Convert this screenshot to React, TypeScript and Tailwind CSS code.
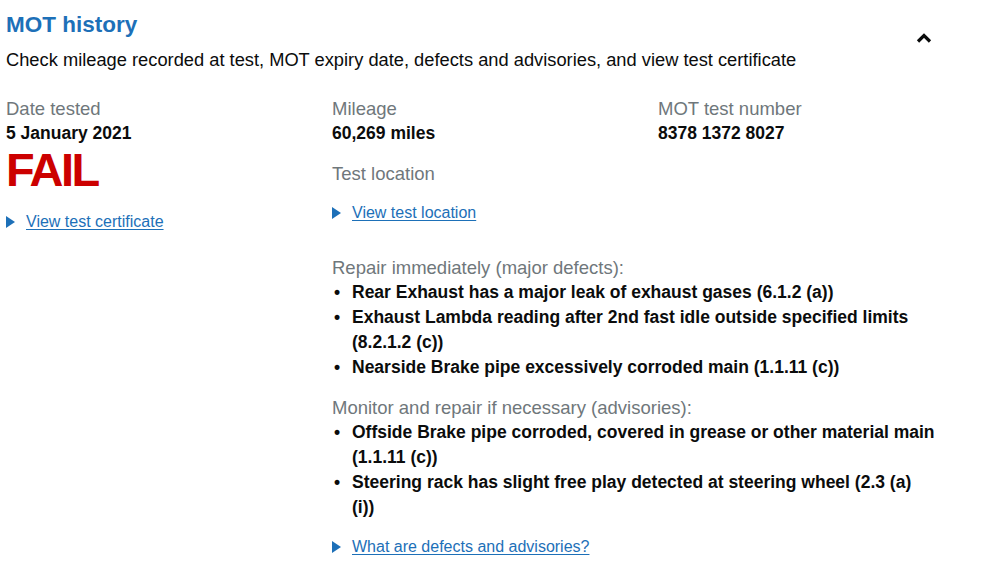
import React from 'react';

const font = { fontFamily: '"Liberation Sans", Arial, sans-serif' };

const Disclosure: React.FC<{ label: string }> = ({ label }) => (
  <div className="flex items-center gap-[11px]">
    <span className="inline-block w-0 h-0 border-y-[6px] border-y-transparent border-l-[9px] border-l-[#1d70b8]" />
    <a href="#" className="text-[16px] text-[#1d70b8] underline underline-offset-2 leading-[20px]">
      {label}
    </a>
  </div>
);

const Field: React.FC<{ label: string; value?: string }> = ({ label, value }) => (
  <div>
    <div className="text-[18.5px] leading-[24px] text-[#6f777b]">{label}</div>
    {value && <div className="text-[17.5px] leading-[24px] font-bold text-[#0b0c0c]">{value}</div>}
  </div>
);

const majors = [
  'Rear Exhaust has a major leak of exhaust gases (6.1.2 (a))',
  'Exhaust Lambda reading after 2nd fast idle outside specified limits (8.2.1.2 (c))',
  'Nearside Brake pipe excessively corroded main (1.1.11 (c))',
];

const advisories = [
  'Offside Brake pipe corroded, covered in grease or other material main (1.1.11 (c))',
  'Steering rack has slight free play detected at steering wheel (2.3 (a) (i))',
];

const DefectList: React.FC<{ title: string; items: string[] }> = ({ title, items }) => (
  <div>
    <div className="text-[18.5px] leading-[24px] text-[#6f777b]">{title}</div>
    <ul>
      {items.map((item) => (
        <li key={item} className="flex text-[17.5px] leading-[25px] font-bold text-[#0b0c0c]">
          <span className="w-[20px] shrink-0 pl-[2px]">•</span>
          <span className="w-[585px]">{item}</span>
        </li>
      ))}
    </ul>
  </div>
);

export default function App() {
  return (
    <div className="w-[998px] h-[570px] bg-white px-[6px] pt-[10px]" style={font}>
      <div className="flex justify-between">
        <div>
          <h2 className="text-[22.5px] leading-[30px] font-bold text-[#1d70b8]">MOT history</h2>
          <p className="mt-[8px] text-[18.3px] leading-[24px] text-[#0b0c0c]">
            Check mileage recorded at test, MOT expiry date, defects and advisories, and view test certificate
          </p>
        </div>
        <div className="pt-[22px] pr-[60px]">
          <svg width="16" height="12" viewBox="0 0 16 12">
            <path d="M2 9.5 L8 3.5 L14 9.5" fill="none" stroke="#0b0c0c" strokeWidth="3.2" />
          </svg>
        </div>
      </div>

      <div className="mt-[25px] grid grid-cols-[326px_326px_326px]">
        <div>
          <Field label="Date tested" value="5 January 2021" />
          <div className="mt-[3px] text-[47px] leading-[44px] tracking-[-2.5px] font-bold text-[#cc0000]">FAIL</div>
          <div className="mt-[20px]">
            <Disclosure label="View test certificate" />
          </div>
        </div>

        <div className="col-span-2">
          <div className="grid grid-cols-[326px_326px]">
            <Field label="Mileage" value="60,269 miles" />
            <Field label="MOT test number" value="8378 1372 8027" />
          </div>
          <div className="mt-[17px]">
            <Field label="Test location" />
          </div>
          <div className="mt-[17px]">
            <Disclosure label="View test location" />
          </div>
          <div className="mt-[33px]">
            <DefectList title="Repair immediately (major defects):" items={majors} />
          </div>
          <div className="mt-[16px]">
            <DefectList title="Monitor and repair if necessary (advisories):" items={advisories} />
          </div>
          <div className="mt-[17px]">
            <Disclosure label="What are defects and advisories?" />
          </div>
        </div>
      </div>
    </div>
  );
}
